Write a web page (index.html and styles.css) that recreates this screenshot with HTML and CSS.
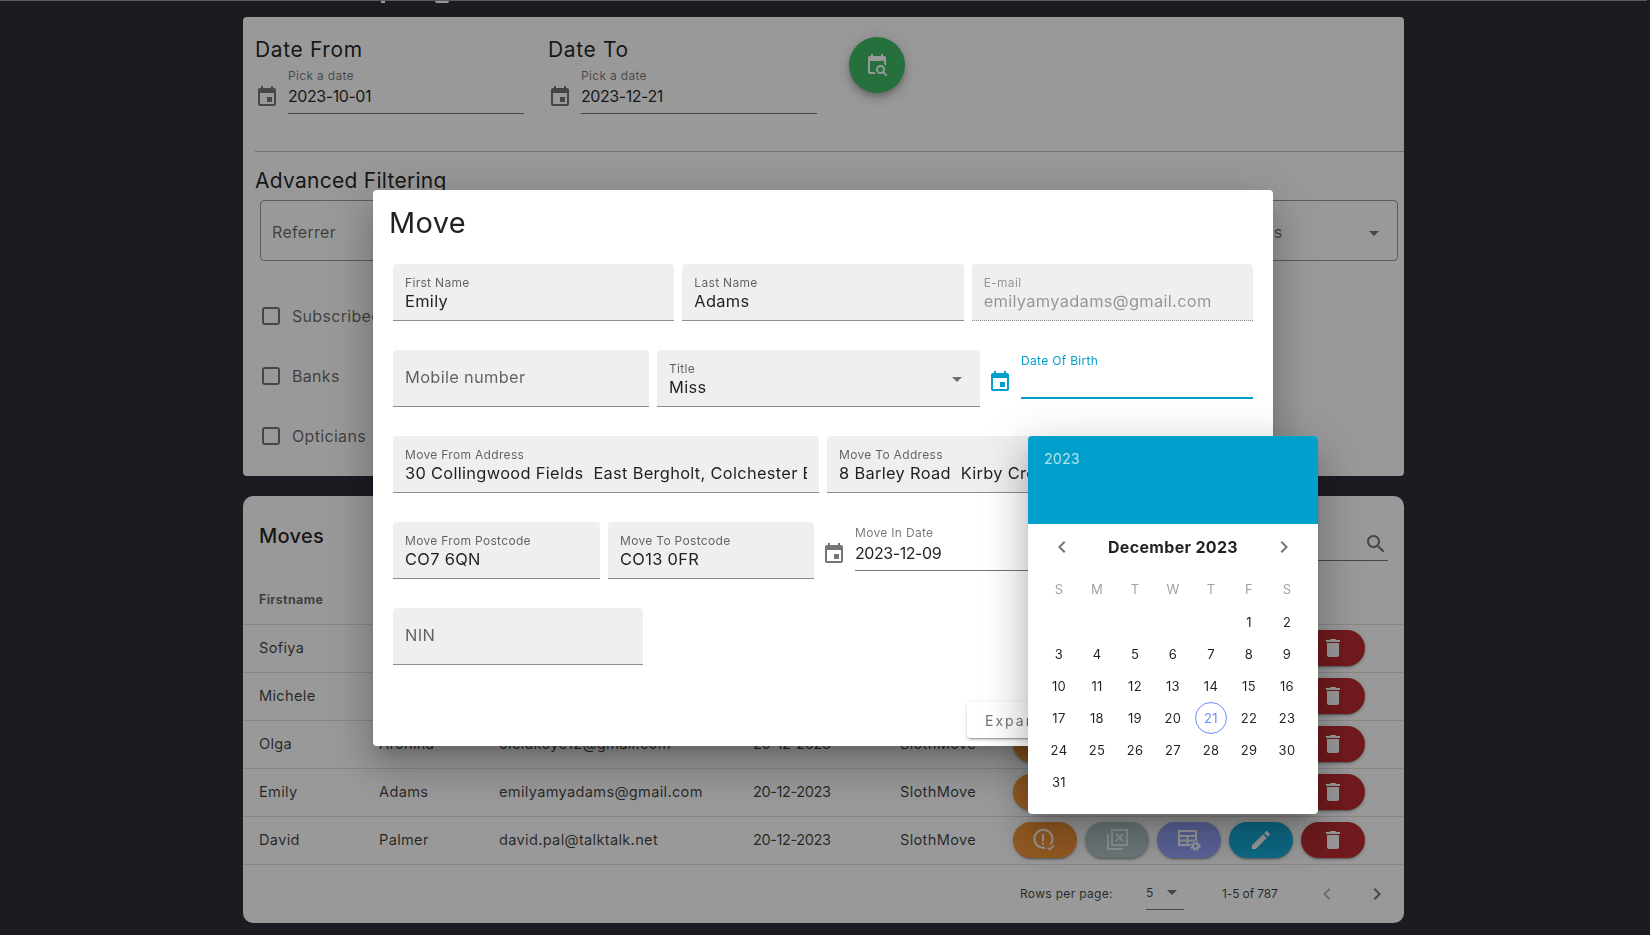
FILE: index.html
```html
<!DOCTYPE html>
<html lang="en">

<head>
    <meta charset="UTF-8">
    <title>Moves</title>
    <link rel="stylesheet" href="styles.css">
</head>

<body>
    <!-- Icon set -->
    <svg class="icon-defs" aria-hidden="true">
        <symbol id="i-event" viewBox="0 0 24 24"><path d="M17 12h-5v5h5v-5zM16 1v2H8V1H6v2H5c-1.11 0-1.99.9-1.99 2L3 19c0 1.1.89 2 2 2h14c1.1 0 2-.9 2-2V5c0-1.1-.9-2-2-2h-1V1h-2zm3 18H5V8h14v11z"/></symbol>
        <symbol id="i-event-search" viewBox="0 0 24 24"><path d="M15.5,12C18,12 20,14 20,16.5C20,17.38 19.75,18.21 19.31,18.9L22.39,22L21,23.39L17.88,20.32C17.19,20.75 16.37,21 15.5,21C13,21 11,19 11,16.5C11,14 13,12 15.5,12M15.5,14A2.5,2.5 0 0,0 13,16.5A2.5,2.5 0 0,0 15.5,19A2.5,2.5 0 0,0 18,16.5A2.5,2.5 0 0,0 15.5,14M19,8H5V19H9.5C9.81,19.75 10.26,20.42 10.81,21H5C3.89,21 3,20.1 3,19V5C3,3.89 3.89,3 5,3H6V1H8V3H16V1H18V3H19A2,2 0 0,1 21,5V13.03C20.5,12.23 19.81,11.54 19,11V8Z"/></symbol>
        <symbol id="i-search" viewBox="0 0 24 24"><path d="M15.5 14h-.79l-.28-.27C15.41 12.59 16 11.11 16 9.5 16 5.91 13.09 3 9.5 3S3 5.91 3 9.5 5.91 16 9.5 16c1.61 0 3.09-.59 4.23-1.57l.27.28v.79l5 4.99L20.49 19l-4.99-5zm-6 0C7.01 14 5 11.99 5 9.5S7.01 5 9.5 5 14 7.01 14 9.5 11.99 14 9.5 14z"/></symbol>
        <symbol id="i-left" viewBox="0 0 24 24"><path d="M15.41 7.41L14 6l-6 6 6 6 1.41-1.41L10.83 12z"/></symbol>
        <symbol id="i-right" viewBox="0 0 24 24"><path d="M10 6L8.59 7.41 13.17 12l-4.58 4.59L10 18l6-6z"/></symbol>
        <symbol id="i-check-alert" viewBox="0 0 24 24">
            <path d="M17.4 16.5A9 9 0 1 0 12 19.7" fill="none" stroke="currentColor" stroke-width="2"/>
            <path d="M9 6h2v7H9zM9 14.6h2v2H9z"/>
            <path d="M14.5 19.5l2.2 2.2 4.3-4.5" fill="none" stroke="currentColor" stroke-width="1.6"/>
        </symbol>
        <symbol id="i-library-x" viewBox="0 0 24 24">
            <path d="M3 6v15h15" fill="none" stroke="currentColor" stroke-width="2"/>
            <rect x="7" y="2" width="15" height="15" fill="none" stroke="currentColor" stroke-width="2"/>
            <path d="M11 6l7 7M18 6l-7 7" fill="none" stroke="currentColor" stroke-width="2"/>
        </symbol>
        <symbol id="i-table-cog" viewBox="0 0 24 24">
            <path d="M2 3h17v14H2z M2 8h17 M10.5 8v9 M2 12.5h17" fill="none" stroke="currentColor" stroke-width="2"/>
            <circle cx="18.5" cy="18" r="5.5" fill="#96a6ff"/>
            <circle cx="18.5" cy="18" r="2.6" fill="none" stroke="currentColor" stroke-width="2"/>
            <circle cx="18.5" cy="18" r="4.3" fill="none" stroke="currentColor" stroke-width="1.6" stroke-dasharray="2 1.4"/>
        </symbol>
        <symbol id="i-edit" viewBox="0 0 24 24"><path d="M3 17.25V21h3.75L17.81 9.94l-3.75-3.75L3 17.25zM20.71 7.04c.39-.39.39-1.02 0-1.41l-2.34-2.34c-.39-.39-1.02-.39-1.41 0l-1.83 1.83 3.75 3.75 1.83-1.83z"/></symbol>
        <symbol id="i-delete" viewBox="0 0 24 24"><path d="M6 19c0 1.1.9 2 2 2h8c1.1 0 2-.9 2-2V7H6v12zM19 4h-3.5l-1-1h-5l-1 1H5v2h14V4z"/></symbol>
    </svg>

    <div class="page">
        <!-- Bottom of the page title, scrolled out of view -->
        <div class="scrolled-title"><span class="frag-p"></span><span class="frag-g"></span></div>

        <section class="card filters">
            <div class="date-row">
                <div class="date-col">
                    <h3>Date From</h3>
                    <div class="date-field">
                        <svg class="icon"><use href="#i-event"/></svg>
                        <div class="date-input">
                            <span class="date-label">Pick a date</span>
                            <span class="date-value">2023-10-01</span>
                        </div>
                    </div>
                </div>
                <div class="date-col last">
                    <h3>Date To</h3>
                    <div class="date-field">
                        <svg class="icon"><use href="#i-event"/></svg>
                        <div class="date-input">
                            <span class="date-label">Pick a date</span>
                            <span class="date-value">2023-12-21</span>
                        </div>
                    </div>
                </div>
                <button class="fab"><svg class="icon"><use href="#i-event-search"/></svg></button>
            </div>

            <h3 class="adv-title">Advanced Filtering</h3>
            <div class="outlined-row">
                <div class="outlined grow">Referrer</div>
                <div class="outlined status">Status<span class="caret"></span></div>
            </div>
            <label class="check"><span class="box"></span>Subscribed</label>
            <label class="check"><span class="box"></span>Banks</label>
            <label class="check"><span class="box"></span>Opticians</label>
        </section>

        <section class="card moves">
            <div class="toolbar">
                <h3>Moves</h3>
                <div class="search"><svg class="icon"><use href="#i-search"/></svg></div>
            </div>
            <table class="moves-table">
                <colgroup>
                    <col class="col-first">
                    <col class="col-last">
                    <col class="col-email">
                    <col class="col-date">
                    <col class="col-source">
                    <col>
                </colgroup>
                <thead>
                    <tr>
                        <th>Firstname</th>
                        <th>Lastname</th>
                        <th>Email</th>
                        <th>Date</th>
                        <th>Source</th>
                        <th></th>
                    </tr>
                </thead>
                <tbody>
                    <tr>
                        <td>Sofiya</td><td></td><td></td><td class="cell-date">20-12-2023</td><td>SlothMove</td>
                        <td>
                            <div class="actions">
                                <button class="act orange"><svg class="icon"><use href="#i-check-alert"/></svg></button>
                                <button class="act grey"><svg class="icon"><use href="#i-library-x"/></svg></button>
                                <button class="act purple"><svg class="icon"><use href="#i-table-cog"/></svg></button>
                                <button class="act teal"><svg class="icon"><use href="#i-edit"/></svg></button>
                                <button class="act red"><svg class="icon"><use href="#i-delete"/></svg></button>
                            </div>
                        </td>
                    </tr>
                    <tr>
                        <td>Michele</td><td></td><td></td><td class="cell-date">20-12-2023</td><td>SlothMove</td>
                        <td>
                            <div class="actions">
                                <button class="act orange"><svg class="icon"><use href="#i-check-alert"/></svg></button>
                                <button class="act grey"><svg class="icon"><use href="#i-library-x"/></svg></button>
                                <button class="act purple"><svg class="icon"><use href="#i-table-cog"/></svg></button>
                                <button class="act teal"><svg class="icon"><use href="#i-edit"/></svg></button>
                                <button class="act red"><svg class="icon"><use href="#i-delete"/></svg></button>
                            </div>
                        </td>
                    </tr>
                    <tr>
                        <td>Olga</td><td>Aronina</td><td>olelukoye12@gmail.com</td><td class="cell-date">20-12-2023</td><td>SlothMove</td>
                        <td>
                            <div class="actions">
                                <button class="act orange"><svg class="icon"><use href="#i-check-alert"/></svg></button>
                                <button class="act grey"><svg class="icon"><use href="#i-library-x"/></svg></button>
                                <button class="act purple"><svg class="icon"><use href="#i-table-cog"/></svg></button>
                                <button class="act teal"><svg class="icon"><use href="#i-edit"/></svg></button>
                                <button class="act red"><svg class="icon"><use href="#i-delete"/></svg></button>
                            </div>
                        </td>
                    </tr>
                    <tr>
                        <td>Emily</td><td>Adams</td><td>emilyamyadams@gmail.com</td><td class="cell-date">20-12-2023</td><td>SlothMove</td>
                        <td>
                            <div class="actions">
                                <button class="act orange"><svg class="icon"><use href="#i-check-alert"/></svg></button>
                                <button class="act grey"><svg class="icon"><use href="#i-library-x"/></svg></button>
                                <button class="act purple"><svg class="icon"><use href="#i-table-cog"/></svg></button>
                                <button class="act teal"><svg class="icon"><use href="#i-edit"/></svg></button>
                                <button class="act red"><svg class="icon"><use href="#i-delete"/></svg></button>
                            </div>
                        </td>
                    </tr>
                    <tr>
                        <td>David</td><td>Palmer</td><td>david.pal@talktalk.net</td><td class="cell-date">20-12-2023</td><td>SlothMove</td>
                        <td>
                            <div class="actions">
                                <button class="act orange"><svg class="icon"><use href="#i-check-alert"/></svg></button>
                                <button class="act grey"><svg class="icon"><use href="#i-library-x"/></svg></button>
                                <button class="act purple"><svg class="icon"><use href="#i-table-cog"/></svg></button>
                                <button class="act teal"><svg class="icon"><use href="#i-edit"/></svg></button>
                                <button class="act red"><svg class="icon"><use href="#i-delete"/></svg></button>
                            </div>
                        </td>
                    </tr>
                </tbody>
            </table>
            <div class="pagination">
                <span class="pg-label">Rows per page:</span>
                <span class="pg-select">5<span class="caret"></span></span>
                <span class="pg-range">1-5 of 787</span>
                <svg class="icon pg-prev"><use href="#i-left"/></svg>
                <svg class="icon pg-next"><use href="#i-right"/></svg>
            </div>
        </section>
    </div>

    <div class="overlay"></div>

    <!-- Move dialog -->
    <div class="dialog">
        <h2>Move</h2>

        <div class="form-row row-three">
            <div class="field"><span class="field-label">First Name</span><span class="field-value">Emily</span></div>
            <div class="field"><span class="field-label">Last Name</span><span class="field-value">Adams</span></div>
            <div class="field disabled"><span class="field-label">E-mail</span><span class="field-value">emilyamyadams@gmail.com</span></div>
        </div>

        <div class="form-row row-contact">
            <div class="field empty">Mobile number</div>
            <div class="field"><span class="field-label">Title</span><span class="field-value">Miss</span><span class="caret"></span></div>
            <div class="date-field focused">
                <svg class="icon"><use href="#i-event"/></svg>
                <div class="date-input">
                    <span class="date-label">Date Of Birth</span>
                    <span class="date-value"></span>
                </div>
            </div>
        </div>

        <div class="form-row row-two">
            <div class="field"><span class="field-label">Move From Address</span><span class="field-value">30 Collingwood Fields  East Bergholt, Colchester Essex</span></div>
            <div class="field"><span class="field-label">Move To Address</span><span class="field-value">8 Barley Road  Kirby Cross</span></div>
        </div>

        <div class="form-row row-postcode">
            <div class="field"><span class="field-label">Move From Postcode</span><span class="field-value">CO7 6QN</span></div>
            <div class="field"><span class="field-label">Move To Postcode</span><span class="field-value">CO13 0FR</span></div>
            <div class="date-field">
                <svg class="icon"><use href="#i-event"/></svg>
                <div class="date-input">
                    <span class="date-label">Move In Date</span>
                    <span class="date-value">2023-12-09</span>
                </div>
            </div>
        </div>

        <div class="form-row row-nin">
            <div class="field empty">NIN</div>
        </div>

        <button class="btn-expand">Expand</button>
    </div>

    <!-- Date picker popup -->
    <div class="picker">
        <div class="picker-head">2023</div>
        <div class="picker-month">
            <svg class="icon"><use href="#i-left"/></svg>
            <span>December 2023</span>
            <svg class="icon"><use href="#i-right"/></svg>
        </div>
        <div class="picker-grid weekdays">
            <span>S</span><span>M</span><span>T</span><span>W</span><span>T</span><span>F</span><span>S</span>
        </div>
        <div class="picker-grid days">
            <span class="first">1</span><span>2</span>
            <span>3</span><span>4</span><span>5</span><span>6</span><span>7</span><span>8</span><span>9</span>
            <span>10</span><span>11</span><span>12</span><span>13</span><span>14</span><span>15</span><span>16</span>
            <span>17</span><span>18</span><span>19</span><span>20</span><span class="today">21</span><span>22</span><span>23</span>
            <span>24</span><span>25</span><span>26</span><span>27</span><span>28</span><span>29</span><span>30</span>
            <span>31</span>
        </div>
    </div>
</body>

</html>
```

FILE: styles.css
```css
* {
    box-sizing: border-box;
}

body {
    margin: 0;
    height: 935px;
    overflow: hidden;
    background-color: #2d2f39;
    font-family: "Inter", "Noto Sans", sans-serif;
    letter-spacing: 0.02em;
    color: rgba(0, 0, 0, 0.87);
}

h2,
h3 {
    margin: 0;
    font-weight: 400;
}

button {
    border: none;
    font-family: inherit;
    padding: 0;
}

.icon-defs {
    display: none;
}

.icon {
    display: block;
    width: 24px;
    height: 24px;
    flex: none;
    fill: currentColor;
    color: rgba(0, 0, 0, 0.54);
}

.caret {
    display: block;
    width: 0;
    height: 0;
    border-left: 5px solid transparent;
    border-right: 5px solid transparent;
    border-top: 5px solid rgba(0, 0, 0, 0.54);
}

.page {
    width: 1161px;
    margin-left: 243px;
}

.scrolled-title {
    position: relative;
    height: 17px;
    border-top: 1px solid #969696;
    margin: 0 -243px 0;
}

.frag-p,
.frag-g {
    position: absolute;
    top: 0;
    height: 2px;
    background-color: #fff;
}

.frag-p {
    left: 381px;
    width: 4px;
}

.frag-g {
    left: 435px;
    width: 14px;
    border-radius: 0 0 7px 7px;
}

.card {
    background-color: #fff;
    border-radius: 4px;
}

/* Filters card */
.filters {
    height: 459px;
    padding: 20px 0 0 12px;
}

.filters h3 {
    font-size: 21px;
    line-height: 26px;
    letter-spacing: 0.03em;
}

.date-row {
    display: flex;
    height: 115px;
    border-bottom: 1px solid #bdbdbd;
}

.date-col {
    width: 293px;
    padding-right: 24px;
}

.date-col.last {
    width: 301px;
    padding-right: 32px;
}

.date-col h3 {
    margin-bottom: 2px;
}

.date-field {
    display: flex;
    gap: 9px;
    align-items: flex-start;
}

.date-field .icon {
    margin-top: 20px;
}

.date-input {
    flex: 1;
    height: 49px;
    border-bottom: 1px solid #757575;
    padding-top: 3px;
}

.date-label {
    display: block;
    font-size: 12px;
    line-height: 16px;
    color: rgba(0, 0, 0, 0.54);
}

.date-value {
    display: block;
    font-size: 16px;
    line-height: 24px;
    min-height: 24px;
    letter-spacing: -0.027em;
}

.fab {
    width: 56px;
    height: 56px;
    border-radius: 50%;
    background-color: #3ebb66;
    display: flex;
    align-items: center;
    justify-content: center;
    box-shadow: 0 3px 5px -1px rgba(0, 0, 0, 0.2), 0 6px 10px 0 rgba(0, 0, 0, 0.14), 0 1px 18px 0 rgba(0, 0, 0, 0.12);
}

.fab .icon {
    color: #fff;
}

.filters .adv-title {
    margin-top: 16px;
    letter-spacing: 0.013em;
}

.outlined-row {
    display: flex;
    gap: 8px;
    margin: 6px 6px 25px 5px;
}

.outlined {
    height: 61px;
    border: 1px solid rgba(0, 0, 0, 0.4);
    border-radius: 4px;
    padding: 2px 18px 0 11px;
    display: flex;
    align-items: center;
    justify-content: space-between;
    font-size: 16px;
    color: rgba(0, 0, 0, 0.6);
}

.outlined .caret {
    margin-top: 3px;
}

.grow {
    flex: 1;
}

.status {
    width: 177px;
}

.check {
    display: flex;
    align-items: center;
    gap: 12px;
    height: 60px;
    margin-left: 7px;
    font-size: 16px;
    color: rgba(0, 0, 0, 0.6);
}

.box {
    width: 18px;
    height: 18px;
    border: 2px solid rgba(0, 0, 0, 0.54);
    border-radius: 3px;
}

/* Moves table */
.moves {
    height: 427px;
    margin-top: 20px;
    border-radius: 10px;
}

.toolbar {
    display: flex;
    justify-content: space-between;
    align-items: flex-start;
    height: 81px;
    padding: 29px 16px 0;
}

.toolbar h3 {
    font-size: 20px;
    line-height: 22px;
    font-weight: 500;
}

.search {
    width: 250px;
    height: 36px;
    border-bottom: 1px solid #757575;
    display: flex;
    justify-content: flex-end;
    align-items: center;
    padding-top: 2px;
}

.moves-table {
    width: 100%;
    border-collapse: separate;
    border-spacing: 0;
    table-layout: fixed;
    font-size: 14.6px;
}

.col-first,
.col-last {
    width: 120px;
}

.col-email {
    width: 254px;
}

.col-date {
    width: 147px;
}

.col-source {
    width: 113px;
}

.moves-table th,
.moves-table td {
    height: 48px;
    padding: 0 0 2px 16px;
    text-align: left;
    white-space: nowrap;
    border-bottom: 1px solid #e0e0e0;
    color: rgba(0, 0, 0, 0.75);
}

.moves-table th {
    font-size: 12.5px;
    font-weight: 700;
    color: rgba(0, 0, 0, 0.6);
}

.moves-table .cell-date {
    letter-spacing: -0.03em;
}

.actions {
    display: flex;
    gap: 8px;
}

.act {
    width: 64px;
    height: 36px;
    border-radius: 18px;
    display: flex;
    align-items: center;
    justify-content: center;
    box-shadow: 0 3px 1px -2px rgba(0, 0, 0, 0.2), 0 2px 2px 0 rgba(0, 0, 0, 0.14), 0 1px 5px 0 rgba(0, 0, 0, 0.12);
}

.act .icon {
    color: #fff;
}

.act.grey .icon {
    opacity: 0.8;
}

.orange {
    background-color: #f49538;
}

.grey {
    background-color: #b2c6cc;
}

.purple {
    background-color: #96a6ff;
}

.teal {
    background-color: #17b0dc;
}

.red {
    background-color: #bb2c32;
}

.pagination {
    display: flex;
    align-items: center;
    justify-content: flex-end;
    height: 56px;
    padding-right: 15px;
    font-size: 12px;
    color: rgba(0, 0, 0, 0.75);
}

.pg-label {
    width: 126px;
}

.pg-select {
    display: flex;
    align-items: center;
    justify-content: space-between;
    width: 38px;
    height: 34px;
    padding-right: 7px;
    border-bottom: 1px solid #757575;
    margin-right: 38px;
}

.pg-range {
    width: 93px;
    letter-spacing: -0.01em;
}

.pagination .icon {
    margin-top: 2px;
}

.pg-prev {
    opacity: 0.5;
    margin-right: 26px;
}

/* Modal layers */
.overlay {
    position: fixed;
    inset: 0;
    background-color: rgba(0, 0, 0, 0.4);
}

.dialog {
    position: absolute;
    left: 373px;
    top: 190px;
    width: 900px;
    height: 556px;
    padding: 16px 20px 0;
    background-color: #fff;
    border-radius: 4px;
    box-shadow: 0 11px 15px -7px rgba(0, 0, 0, 0.2), 0 24px 38px 3px rgba(0, 0, 0, 0.14), 0 9px 46px 8px rgba(0, 0, 0, 0.12);
}

.dialog h2 {
    font-size: 29px;
    line-height: 34px;
    margin: 0 0 24px -4px;
}

.form-row {
    display: grid;
    gap: 8px;
    align-items: start;
    margin-bottom: 29px;
}

.row-three {
    grid-template-columns: repeat(3, 1fr);
}

.row-contact {
    grid-template-columns: 256px 323px 1fr;
}

.row-two {
    grid-template-columns: repeat(2, 1fr);
}

.row-postcode {
    grid-template-columns: 207px 206px 1fr;
}

.row-nin {
    grid-template-columns: 250px;
    margin-bottom: 37px;
}

.field {
    position: relative;
    height: 57px;
    padding: 11px 12px 0;
    background-color: #efefef;
    border-radius: 4px 4px 0 0;
    border-bottom: 1px solid #8c8c8c;
    overflow: hidden;
}

.field-label {
    display: block;
    font-size: 12px;
    line-height: 16px;
    color: rgba(0, 0, 0, 0.6);
}

.field-value {
    display: block;
    font-size: 16.4px;
    line-height: 20px;
    white-space: pre;
    overflow: hidden;
}

.field .caret {
    position: absolute;
    right: 18px;
    top: 27px;
}

.field.empty {
    padding-top: 17px;
    font-size: 16.4px;
    line-height: 20px;
    color: rgba(0, 0, 0, 0.6);
}

.disabled {
    border-bottom: 1px dotted #8c8c8c;
}

.disabled .field-label,
.disabled .field-value {
    color: rgba(0, 0, 0, 0.38);
}

.focused .icon,
.focused .date-label {
    color: #009fcc;
}

.focused .date-input {
    border-bottom: 2px solid #009fcc;
}

.btn-expand {
    display: block;
    width: 286px;
    height: 36px;
    margin-left: 574px;
    padding-left: 18px;
    text-align: left;
    background-color: #fff;
    border-radius: 4px;
    font-size: 14px;
    letter-spacing: 2px;
    color: #757575;
    box-shadow: 0 3px 1px -2px rgba(0, 0, 0, 0.2), 0 2px 2px 0 rgba(0, 0, 0, 0.14), 0 1px 5px 0 rgba(0, 0, 0, 0.12);
}

.picker {
    position: absolute;
    left: 1028px;
    top: 436px;
    width: 290px;
    height: 378px;
    background-color: #fff;
    border-radius: 4px;
    overflow: hidden;
    box-shadow: 0 11px 15px -7px rgba(0, 0, 0, 0.2), 0 24px 38px 3px rgba(0, 0, 0, 0.14), 0 9px 46px 8px rgba(0, 0, 0, 0.12);
}

.picker-head {
    height: 88px;
    padding: 13px 16px 0;
    background-color: #009fcc;
    font-size: 14px;
    line-height: 20px;
    color: rgba(255, 255, 255, 0.7);
}

.picker-month {
    display: flex;
    align-items: center;
    justify-content: space-between;
    height: 46px;
    padding: 0 22px;
    font-size: 16px;
    font-weight: 700;
    color: rgba(0, 0, 0, 0.87);
}

.picker-grid {
    display: grid;
    grid-template-columns: repeat(7, 38px);
    padding: 0 12px;
    text-align: center;
    font-size: 13px;
}

.picker-grid span {
    display: flex;
    align-items: center;
    justify-content: center;
    height: 32px;
}

.weekdays {
    margin-top: 3px;
    margin-bottom: 1px;
    color: rgba(0, 0, 0, 0.38);
}

.days .first {
    grid-column-start: 6;
}

.days .today {
    width: 32px;
    margin: 0 auto;
    border: 1px solid #6d8cff;
    border-radius: 50%;
    color: #6d8cff;
}
```
